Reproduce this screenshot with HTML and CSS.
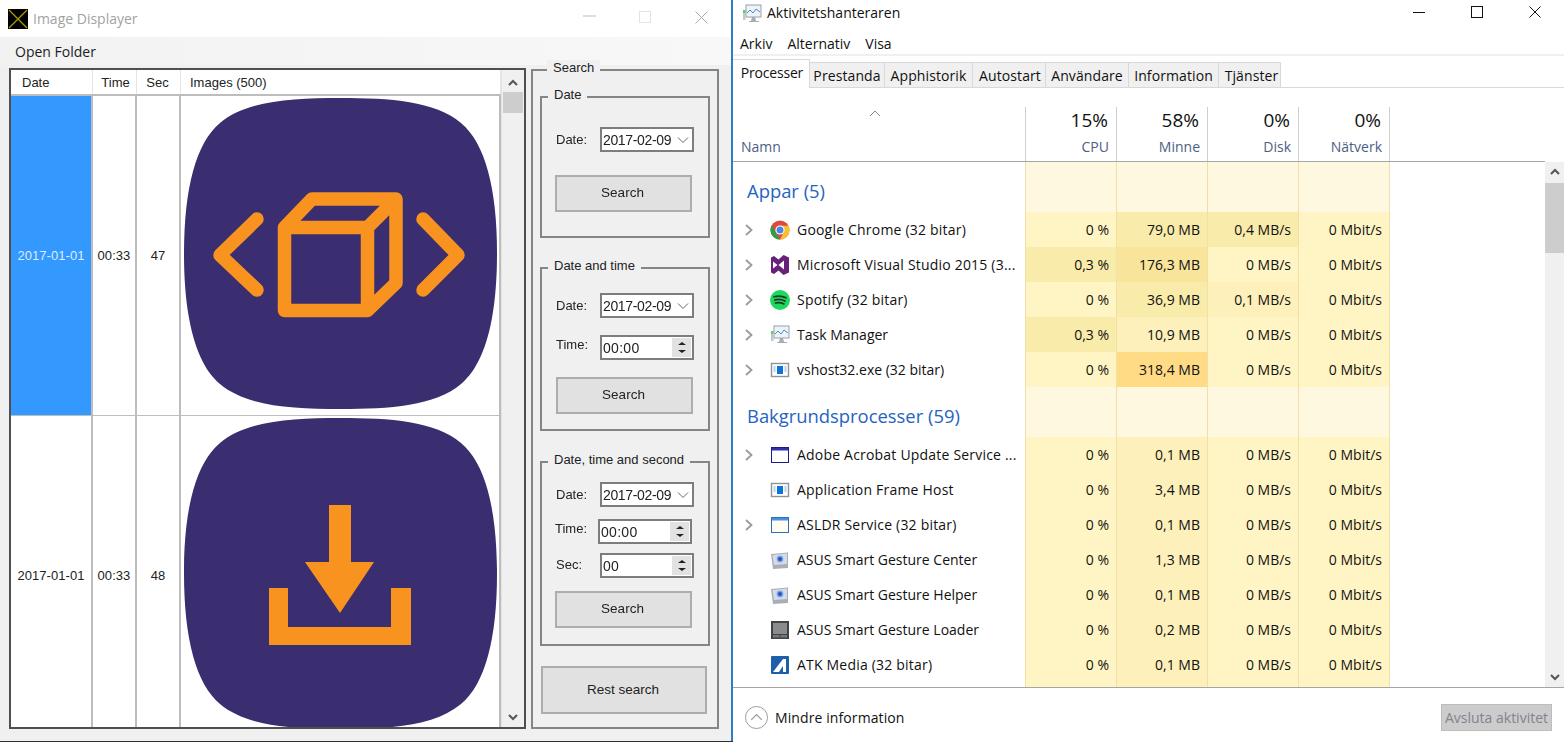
FILE: index.html
```html
<!DOCTYPE html>
<html lang="en">
<head>
    <meta charset="UTF-8">
    <meta name="viewport" content="width=device-width, initial-scale=1.0">
    <title>Image Displayer and Task Manager</title>
    <link rel="stylesheet" href="styles.css">
</head>
<body>
    <svg class="icon-defs" aria-hidden="true">
        <symbol id="squircle" viewBox="0 0 313 311">
            <path d="M156.5 0C206 0 251 3 277 25C301 45 313 90 313 155.5C313 221 301 266 277 286C251 308 206 311 156.5 311C107 311 62 308 36 286C12 266 0 221 0 155.5C0 90 12 45 36 25C62 3 107 0 156.5 0Z" fill="#3a2d70"/>
        </symbol>
        <symbol id="chev" viewBox="0 0 10 14">
            <path d="M2 2l5.5 5L2 12" fill="none" stroke="#9a9a9a" stroke-width="1.8"/>
        </symbol>
        <symbol id="ico-taskman" viewBox="0 0 20 20">
            <rect x="4" y="1" width="15" height="12" fill="#eef3f8" stroke="#9aa0a6"/>
            <path d="M5 9l3-3 3 3 3-4 4 3" fill="none" stroke="#3f8fd8"/>
            <rect x="1" y="6" width="2.5" height="10" fill="#c4c8c8"/>
            <rect x="1" y="6" width="2.5" height="3" fill="#5fce5f"/>
            <path d="M10 13h3l1 4h3v1H7v-1h2z" fill="#a8acb0"/>
        </symbol>
        <symbol id="ico-app" viewBox="0 0 20 20">
            <rect x="1.5" y="3.5" width="17" height="13" fill="#fff" stroke="#8f9296" stroke-width="1.4"/>
            <rect x="7" y="6" width="6" height="8" fill="#0a74d8"/>
            <path d="M3.5 7h2M3.5 9h2M3.5 11h2M14.5 7h2M14.5 9h2M14.5 11h2" stroke="#6aa6dc"/>
        </symbol>
        <symbol id="ico-gesture" viewBox="0 0 20 20">
            <path d="M1 4l17-1.500V18L3 19z" fill="#a9aeb6"/>
            <path d="M2.500 5L17 3.500V14L4 15z" fill="#d4dbe6"/>
            <circle cx="10" cy="9" r="3.400" fill="#7fa6e6"/>
            <circle cx="10" cy="9" r="2" fill="#1f55c4"/>
        </symbol>
    </svg>

    <div class="viewer">
        <div class="viewer-title">
            <svg class="viewer-logo" viewBox="0 0 20 20">
                <rect width="20" height="20" fill="#000"/>
                <path d="M1 1l18 18M19 1L1 19" stroke="#a8a000" stroke-width="1.2"/>
            </svg>
            <span class="viewer-name">Image Displayer</span>
            <div class="viewer-controls">
                <svg width="13" height="13" viewBox="0 0 13 13"><path d="M0 5h13" stroke="#bdbdbd"/></svg>
                <svg width="13" height="13" viewBox="0 0 13 13"><rect x=".5" y=".5" width="11" height="11" fill="none" stroke="#e3e3e3"/></svg>
                <svg width="13" height="13" viewBox="0 0 13 13"><path d="M.5.5l12 12M12.5.5l-12 12" stroke="#a9a9a9"/></svg>
            </div>
        </div>
        <div class="viewer-menu">Open Folder</div>
        <div class="viewer-body">
            <div class="grid">
                <div class="grid-main">
                    <div class="grid-row grid-head">
                        <div class="cell-date head-date">Date</div>
                        <div class="cell-time">Time</div>
                        <div class="cell-sec">Sec</div>
                        <div class="cell-img">Images (500)</div>
                    </div>
                    <div class="grid-row grid-item">
                        <div class="cell-date selected">2017-01-01</div>
                        <div class="cell-time">00:33</div>
                        <div class="cell-sec">47</div>
                        <div class="cell-img">
                            <svg class="thumb" viewBox="0 0 313 311">
                                <use href="#squircle"/>
                                <g fill="none" stroke="#f7931e" stroke-width="13.5" stroke-linecap="round" stroke-linejoin="round">
                                    <path d="M100.5 129.500V212.500H183.500V129.500H100.500L128 101H212V185L183.500 212.500M183.500 129.500L212 101"/>
                                    <path d="M73 121L36 157L73 192M239 121L274 157L239 192"/>
                                </g>
                            </svg>
                        </div>
                    </div>
                    <div class="grid-row grid-item">
                        <div class="cell-date">2017-01-01</div>
                        <div class="cell-time">00:33</div>
                        <div class="cell-sec">48</div>
                        <div class="cell-img">
                            <svg class="thumb" viewBox="0 0 313 311">
                                <use href="#squircle"/>
                                <path fill="#f7931e" d="M145 87h22v57h23l-34 51-35-51h24zM85 170h19v39h103v-39h20v57H85z"/>
                            </svg>
                        </div>
                    </div>
                </div>
                <div class="scrollbar viewer-scroll">
                    <svg class="scroll-arrow" viewBox="0 0 12 8"><path d="M2 6l4-4 4 4" fill="none" stroke="#555" stroke-width="2"/></svg>
                    <div class="scroll-thumb"></div>
                    <svg class="scroll-arrow scroll-end" viewBox="0 0 12 8"><path d="M2 2l4 4 4-4" fill="none" stroke="#555" stroke-width="2"/></svg>
                </div>
            </div>

            <div class="group search-box">
                <span class="group-title">Search</span>

                <div class="group search-date">
                    <span class="group-title">Date</span>
                    <div class="field-row">
                        <label>Date:</label>
                        <div class="field combo">2017-02-09<svg viewBox="0 0 12 8"><path d="M1 1.500l5 5 5-5" fill="none" stroke="#666"/></svg></div>
                    </div>
                    <button class="win-btn">Search</button>
                </div>

                <div class="group search-time">
                    <span class="group-title">Date and time</span>
                    <div class="field-row">
                        <label>Date:</label>
                        <div class="field combo">2017-02-09<svg viewBox="0 0 12 8"><path d="M1 1.500l5 5 5-5" fill="none" stroke="#666"/></svg></div>
                    </div>
                    <div class="field-row">
                        <label class="label-up">Time:</label>
                        <div class="field spin">00:00<span class="spin-btns"><i class="up"></i><i class="down"></i></span></div>
                    </div>
                    <button class="win-btn">Search</button>
                </div>

                <div class="group search-sec">
                    <span class="group-title">Date, time and second</span>
                    <div class="field-row">
                        <label>Date:</label>
                        <div class="field combo">2017-02-09<svg viewBox="0 0 12 8"><path d="M1 1.500l5 5 5-5" fill="none" stroke="#666"/></svg></div>
                    </div>
                    <div class="field-row row-shift">
                        <label class="label-up">Time:</label>
                        <div class="field spin">00:00<span class="spin-btns"><i class="up"></i><i class="down"></i></span></div>
                    </div>
                    <div class="field-row">
                        <label class="label-up-sm">Sec:</label>
                        <div class="field spin">00<span class="spin-btns"><i class="up"></i><i class="down"></i></span></div>
                    </div>
                    <button class="win-btn">Search</button>
                </div>

                <button class="win-btn rest-btn">Rest search</button>
            </div>
        </div>
    </div>

    <div class="taskman">
        <div class="tm-title">
            <svg class="tm-logo"><use href="#ico-taskman"/></svg>
            <span class="tm-name">Aktivitetshanteraren</span>
            <div class="tm-controls">
                <svg width="12" height="12" viewBox="0 0 12 12"><path d="M0 6.500h12" stroke="#111"/></svg>
                <svg width="12" height="12" viewBox="0 0 12 12"><rect x=".5" y=".5" width="11" height="11" fill="none" stroke="#111"/></svg>
                <svg width="12" height="12" viewBox="0 0 12 12"><path d="M.5.5l11 11M11.500.5l-11 11" stroke="#111"/></svg>
            </div>
        </div>
        <div class="tm-menu">
            <span>Arkiv</span>
            <span>Alternativ</span>
            <span>Visa</span>
        </div>
        <div class="tm-tabs">
            <div class="tab active">Processer</div>
            <div class="tab tab-perf">Prestanda</div>
            <div class="tab tab-hist">Apphistorik</div>
            <div class="tab tab-start">Autostart</div>
            <div class="tab tab-users">Användare</div>
            <div class="tab tab-info">Information</div>
            <div class="tab tab-serv">Tjänster</div>
        </div>

        <div class="tm-table">
            <div class="tm-main">
                <div class="tm-head">
                    <div class="head-name">
                        <svg class="sort-caret" viewBox="0 0 12 7"><path d="M1 6l5-5 5 5" fill="none" stroke="#888"/></svg>
                        <span>Namn</span>
                    </div>
                    <div class="head-col"><b>15%</b><span>CPU</span></div>
                    <div class="head-col"><b>58%</b><span>Minne</span></div>
                    <div class="head-col"><b>0%</b><span>Disk</span></div>
                    <div class="head-col head-last"><b>0%</b><span>Nätverk</span></div>
                </div>

                <div class="tm-row tm-group">
                    <div class="name"><span class="group-name">Appar (5)</span></div>
                    <div class="val"></div><div class="val"></div><div class="val"></div><div class="val"></div>
                </div>

                <div class="tm-row">
                    <div class="name">
                        <svg class="expander"><use href="#chev"/></svg>
                        <svg class="proc-icon" viewBox="0 0 20 20">
                            <circle cx="10" cy="10" r="9.500" fill="#dd4b3e"/>
                            <path d="M1.800 5.200L6 13l4 6.500A9.500 9.500 0 0 1 1.800 5.200z" fill="#2f9e47"/>
                            <path d="M10 5.800h8.600A9.500 9.500 0 0 1 10 19.500L14 12z" fill="#fbc02d"/>
                            <circle cx="10" cy="10" r="4.600" fill="#fff"/>
                            <circle cx="10" cy="10" r="3.500" fill="#4a86e8"/>
                        </svg>
                        <span>Google Chrome (32 bitar)</span>
                    </div>
                    <div class="val heat-0">0 %</div><div class="val heat-1">79,0 MB</div><div class="val heat-1">0,4 MB/s</div><div class="val heat-0">0 Mbit/s</div>
                </div>
                <div class="tm-row">
                    <div class="name">
                        <svg class="expander"><use href="#chev"/></svg>
                        <svg class="proc-icon" viewBox="0 0 20 20">
                            <path d="M13.500 0L19 2.500v15L13.500 20 8.500 15.500 4 19l-3-1.500v-15L4 1l4.500 3.500z" fill="#68217a"/>
                            <path d="M14 5.500v9L8.500 10zM3 6.500L7.500 10 3 13.500z" fill="#fff"/>
                        </svg>
                        <span>Microsoft Visual Studio 2015 (3...</span>
                    </div>
                    <div class="val heat-1">0,3 %</div><div class="val heat-2">176,3 MB</div><div class="val heat-0">0 MB/s</div><div class="val heat-0">0 Mbit/s</div>
                </div>
                <div class="tm-row">
                    <div class="name">
                        <svg class="expander"><use href="#chev"/></svg>
                        <svg class="proc-icon" viewBox="0 0 20 20">
                            <circle cx="10" cy="10" r="10" fill="#1ed760"/>
                            <path d="M4 6.800c4-1.200 8.500-.8 12 1M4.700 10c3.500-1 7.300-.6 10.300 1M5.400 13c3-.8 6-.5 8.600.9" fill="none" stroke="#1a3a24" stroke-width="1.700" stroke-linecap="round"/>
                        </svg>
                        <span>Spotify (32 bitar)</span>
                    </div>
                    <div class="val heat-0">0 %</div><div class="val heat-1">36,9 MB</div><div class="val heat-low">0,1 MB/s</div><div class="val heat-0">0 Mbit/s</div>
                </div>
                <div class="tm-row">
                    <div class="name tight">
                        <svg class="expander"><use href="#chev"/></svg>
                        <svg class="proc-icon"><use href="#ico-taskman"/></svg>
                        <span>Task Manager</span>
                    </div>
                    <div class="val heat-1">0,3 %</div><div class="val heat-low">10,9 MB</div><div class="val heat-0">0 MB/s</div><div class="val heat-0">0 Mbit/s</div>
                </div>
                <div class="tm-row">
                    <div class="name tight">
                        <svg class="expander"><use href="#chev"/></svg>
                        <svg class="proc-icon"><use href="#ico-app"/></svg>
                        <span>vshost32.exe (32 bitar)</span>
                    </div>
                    <div class="val heat-0">0 %</div><div class="val heat-3">318,4 MB</div><div class="val heat-0">0 MB/s</div><div class="val heat-0">0 Mbit/s</div>
                </div>

                <div class="tm-row tm-group">
                    <div class="name"><span class="group-name">Bakgrundsprocesser (59)</span></div>
                    <div class="val"></div><div class="val"></div><div class="val"></div><div class="val"></div>
                </div>

                <div class="tm-row">
                    <div class="name">
                        <svg class="expander"><use href="#chev"/></svg>
                        <svg class="proc-icon" viewBox="0 0 20 20">
                            <rect x="1.500" y="2.500" width="17" height="15" fill="#fff" stroke="#1c1c8c"/>
                            <rect x="2" y="3" width="16" height="2.500" fill="#3030b0"/>
                        </svg>
                        <span>Adobe Acrobat Update Service ...</span>
                    </div>
                    <div class="val heat-0">0 %</div><div class="val heat-low">0,1 MB</div><div class="val heat-0">0 MB/s</div><div class="val heat-0">0 Mbit/s</div>
                </div>
                <div class="tm-row">
                    <div class="name">
                        <svg class="proc-icon no-expander"><use href="#ico-app"/></svg>
                        <span>Application Frame Host</span>
                    </div>
                    <div class="val heat-0">0 %</div><div class="val heat-low">3,4 MB</div><div class="val heat-0">0 MB/s</div><div class="val heat-0">0 Mbit/s</div>
                </div>
                <div class="tm-row">
                    <div class="name">
                        <svg class="expander"><use href="#chev"/></svg>
                        <svg class="proc-icon" viewBox="0 0 20 20">
                            <rect x="1.500" y="2.500" width="17" height="15" fill="#fffdf2" stroke="#2a6fc0"/>
                            <rect x="2" y="3" width="16" height="2.500" fill="#4a90dc"/>
                        </svg>
                        <span>ASLDR Service (32 bitar)</span>
                    </div>
                    <div class="val heat-0">0 %</div><div class="val heat-low">0,1 MB</div><div class="val heat-0">0 MB/s</div><div class="val heat-0">0 Mbit/s</div>
                </div>
                <div class="tm-row">
                    <div class="name tight">
                        <svg class="proc-icon no-expander"><use href="#ico-gesture"/></svg>
                        <span>ASUS Smart Gesture Center</span>
                    </div>
                    <div class="val heat-0">0 %</div><div class="val heat-low">1,3 MB</div><div class="val heat-0">0 MB/s</div><div class="val heat-0">0 Mbit/s</div>
                </div>
                <div class="tm-row">
                    <div class="name tight">
                        <svg class="proc-icon no-expander"><use href="#ico-gesture"/></svg>
                        <span>ASUS Smart Gesture Helper</span>
                    </div>
                    <div class="val heat-0">0 %</div><div class="val heat-low">0,1 MB</div><div class="val heat-0">0 MB/s</div><div class="val heat-0">0 Mbit/s</div>
                </div>
                <div class="tm-row">
                    <div class="name tight">
                        <svg class="proc-icon no-expander" viewBox="0 0 20 20">
                            <rect x="1" y="1" width="18" height="18" fill="#3f4449"/>
                            <rect x="3" y="3" width="14" height="11" fill="#8b8b8b"/>
                            <rect x="3" y="15" width="6.500" height="2.500" fill="#777"/>
                            <rect x="10.500" y="15" width="6.500" height="2.500" fill="#777"/>
                        </svg>
                        <span>ASUS Smart Gesture Loader</span>
                    </div>
                    <div class="val heat-0">0 %</div><div class="val heat-low">0,2 MB</div><div class="val heat-0">0 MB/s</div><div class="val heat-0">0 Mbit/s</div>
                </div>
                <div class="tm-row">
                    <div class="name">
                        <svg class="proc-icon no-expander" viewBox="0 0 20 20">
                            <rect x="1" y="1" width="18" height="18" rx="1" fill="#1d5fa8"/>
                            <path d="M3 17L13 4h3v13h-3v-6l-4 6z" fill="#fff"/>
                        </svg>
                        <span>ATK Media (32 bitar)</span>
                    </div>
                    <div class="val heat-0">0 %</div><div class="val heat-low">0,1 MB</div><div class="val heat-0">0 MB/s</div><div class="val heat-0">0 Mbit/s</div>
                </div>
                <div class="tm-row">
                    <div class="name"></div>
                    <div class="val heat-0"></div><div class="val heat-low"></div><div class="val heat-0"></div><div class="val heat-0"></div>
                </div>
            </div>
            <div class="scrollbar tm-scroll">
                <svg class="scroll-arrow" viewBox="0 0 12 8"><path d="M2 6l4-4 4 4" fill="none" stroke="#555" stroke-width="2"/></svg>
                <div class="scroll-thumb"></div>
                <svg class="scroll-arrow scroll-end" viewBox="0 0 12 8"><path d="M2 2l4 4 4-4" fill="none" stroke="#555" stroke-width="2"/></svg>
            </div>
        </div>

        <div class="tm-footer">
            <svg class="less-icon" viewBox="0 0 24 24">
                <circle cx="12" cy="12" r="11.500" fill="none" stroke="#999"/>
                <path d="M6.500 14.500L12 9l5.500 5.500" fill="none" stroke="#999" stroke-width="1.300"/>
            </svg>
            <span class="less-text">Mindre information</span>
            <button class="end-task">Avsluta aktivitet</button>
        </div>
    </div>
</body>
</html>
```

FILE: styles.css
```css
* {
    margin: 0;
    padding: 0;
    box-sizing: border-box;
}

body {
    width: 1564px;
    height: 742px;
    display: flex;
    overflow: hidden;
    background: #2b3038;
    font-family: 'Liberation Sans', Arial, sans-serif;
}

.icon-defs {
    display: none;
}

/* Image Displayer window */
.viewer {
    width: 733px;
    height: 741px;
    flex-shrink: 0;
    background: #f0f0f0;
    border-right: 2px solid #2f7fc0;
    color: #222;
    font-size: 13px;
}

.viewer-title {
    height: 37px;
    display: flex;
    align-items: center;
    padding-left: 8px;
    background: white;
}

.viewer-logo {
    width: 20px;
    height: 20px;
}

.viewer-name {
    margin-left: 5px;
    font-family: 'Open Sans', sans-serif;
    font-size: 14px;
    color: #a2a2a2;
}

.viewer-controls {
    margin-left: auto;
    padding: 0 23px 2px 0;
    display: flex;
    gap: 43px;
}

.viewer-menu {
    height: 28px;
    line-height: 29px;
    padding-left: 15px;
    font-family: 'Open Sans', sans-serif;
    font-size: 14px;
    color: #1c1c1c;
    background: linear-gradient(to right, #f2f2f2, #f8f8f8);
}

.viewer-body {
    display: flex;
    padding: 3px 0 0 9px;
    filter: blur(0.35px);
}

.grid {
    width: 517px;
    height: 661px;
    display: flex;
    border: 2px solid #4f4f4f;
    background: white;
}

.grid-main {
    width: 490px;
    overflow: hidden;
}

.grid-row {
    display: flex;
}

.grid-row > div {
    border-right: 2px solid #bdbdbd;
    flex-shrink: 0;
}

.grid-head {
    height: 26px;
    border-bottom: 2px solid #bdbdbd;
}

.grid-head > div {
    padding-top: 2px;
    line-height: 22px;
    border-right-width: 1px;
    border-right-color: #e4e4e4;
}

.grid-item {
    height: 320px;
    border-bottom: 1px solid #bdbdbd;
    align-items: stretch;
    letter-spacing: 0.05px;
}

.cell-date {
    width: 82px;
    display: flex;
    align-items: center;
    justify-content: center;
}

.cell-time {
    width: 44px;
    display: flex;
    align-items: center;
    justify-content: center;
}

.cell-sec {
    width: 44px;
    display: flex;
    align-items: center;
    justify-content: center;
}

.cell-img {
    width: 320px;
}

.grid-head .cell-img {
    padding-left: 9px;
}

.grid-head .cell-time {
    padding-left: 2px;
}

.grid-head .cell-sec {
    padding-right: 2px;
}

.head-date {
    justify-content: flex-start;
    padding-left: 11px;
}

.selected {
    background: #3399ff;
    color: #dcecff;
}

.thumb {
    display: block;
    width: 313px;
    height: 311px;
    margin: 2px 0 0 3px;
}

.scrollbar {
    display: flex;
    flex-direction: column;
    align-items: center;
    background: #f0f0f0;
}

.viewer-scroll {
    width: 23px;
    border-left: 1px solid #e4e4e4;
    padding-top: 9px;
}

.viewer-scroll .scroll-thumb {
    width: 20px;
    height: 21px;
    margin-top: 5px;
}

.scroll-arrow {
    width: 12px;
    height: 8px;
    flex-shrink: 0;
}

.scroll-thumb {
    background: #cdcdcd;
}

.scroll-end {
    margin-top: auto;
    margin-bottom: 6px;
}

.group {
    position: relative;
    border: 2px solid #858585;
}

.group-title {
    position: absolute;
    top: -11px;
    left: 6px;
    padding: 0 6px;
    line-height: 16px;
    background: #f0f0f0;
    white-space: nowrap;
}

.search-box {
    width: 188px;
    height: 660px;
    margin: 1px 0 0 5px;
    padding: 25px 7px 0 7px;
    flex-shrink: 0;
}

.search-box > .group-title {
    left: 14px;
}

.search-date {
    height: 142px;
    padding-top: 29px;
}

.search-time {
    height: 164px;
    margin-top: 29px;
    padding-top: 24px;
}

.search-sec {
    height: 185px;
    margin-top: 30px;
    padding-top: 19px;
}

.field-row {
    display: flex;
    align-items: center;
    padding-left: 14px;
    margin-bottom: 17px;
}

.field-row label {
    width: 44px;
}

.label-up {
    padding-bottom: 6px;
}

.label-up-sm {
    padding-bottom: 2px;
}

.search-sec .field-row {
    margin-bottom: 12px;
}

.search-sec .field-row + .field-row {
    margin-bottom: 9px;
}

.search-sec .field-row + .field-row + .field-row {
    margin-bottom: 13px;
}

.row-shift {
    padding-left: 13px;
}

.row-shift label {
    width: 43px;
}

.field {
    width: 94px;
    height: 25px;
    display: flex;
    align-items: center;
    padding-left: 1px;
    background: white;
    border: 2px solid #7d7d7d;
    font-size: 14px;
}

.combo svg {
    width: 12px;
    height: 8px;
    margin-left: auto;
    margin-right: 3px;
}

.combo {
    letter-spacing: -0.35px;
}

.spin {
    letter-spacing: 0.3px;
}

.spin-btns {
    width: 19px;
    height: 19px;
    margin-left: auto;
    margin-right: 1px;
    display: flex;
    flex-direction: column;
    align-items: center;
    background: #e2e2e2;
}

.spin-btns i {
    width: 0;
    height: 0;
    border-left: 4px solid transparent;
    border-right: 4px solid transparent;
}

.spin-btns .up {
    margin-top: 4px;
    border-bottom: 3px solid #222;
}

.spin-btns .down {
    margin-top: 5px;
    border-top: 3px solid #222;
}

.win-btn {
    display: block;
    width: 137px;
    height: 37px;
    padding: 0 2px 2px 0;
    background: #e1e1e1;
    border: 2px solid #adadad;
    color: #222;
    font-family: inherit;
    font-size: 13.5px;
}

.search-date .win-btn {
    margin: 23px 0 0 13px;
}

.search-time .win-btn {
    margin: 17px 0 0 14px;
}

.search-sec .win-btn {
    margin-left: 13px;
}

.rest-btn {
    width: 166px;
    height: 48px;
    margin: 20px 0 0 1px;
}

/* Task manager window */
.taskman {
    flex: 1;
    height: 742px;
    display: flex;
    flex-direction: column;
    background: white;
    color: #111;
    font-family: 'Open Sans', sans-serif;
    font-size: 14px;
}

.tm-title {
    height: 30px;
    display: flex;
    align-items: flex-start;
    padding: 4px 23px 0 9px;
}

.tm-logo {
    width: 20px;
    height: 20px;
}

.tm-name {
    margin-left: 5px;
    line-height: 18px;
}

.tm-controls {
    margin-left: auto;
    padding-top: 2px;
    display: flex;
    gap: 46px;
}

.tm-menu {
    height: 26px;
    display: flex;
    gap: 15px;
    padding-left: 7px;
    line-height: 27px;
    border-bottom: 2px solid #f0f0f0;
}

.tm-tabs {
    height: 32px;
    display: flex;
    align-items: flex-end;
    border-bottom: 1px solid #d9d9d9;
}

.tab {
    height: 26px;
    line-height: 25px;
    text-align: center;
    letter-spacing: 0.1px;
    background: #f0f0f0;
    border: 1px solid #d9d9d9;
    border-left: none;
    margin-bottom: -1px;
}

.tab.active {
    width: 77px;
    height: 29px;
    padding-left: 2px;
    letter-spacing: -0.2px;
    background: white;
    border-bottom: none;
    line-height: 26px;
}

.tab-perf { width: 75px; }
.tab-hist { width: 88px; }
.tab-start { width: 73px; padding-left: 2px; }
.tab-users { width: 83px; }
.tab-info { width: 90px; }
.tab-serv { width: 62px; padding-left: 4px; }

.tm-table {
    height: 581px;
    display: flex;
    margin-top: 19px;
    border-bottom: 1px solid #a5a5a5;
    overflow: hidden;
}

.tm-main {
    width: 812px;
    flex-shrink: 0;
    overflow: hidden;
}

.tm-head {
    height: 55px;
    display: grid;
    grid-template-columns: 292px repeat(4, 91px);
    border-bottom: 1px solid #a5a5a5;
}

.head-name {
    position: relative;
    padding: 30px 0 0 8px;
    color: #4d6082;
}

.sort-caret {
    position: absolute;
    left: 136px;
    top: 3px;
    width: 12px;
    height: 7px;
}

.head-col {
    display: flex;
    flex-direction: column;
    align-items: flex-end;
    padding: 0 7px 0 0;
    border-left: 1px solid #cfcfcf;
    color: #4d6082;
}

.head-last {
    border-right: 1px solid #cfcfcf;
    width: 92px;
}

.head-col b {
    height: 30px;
    margin-right: 1px;
    font-size: 19px;
    font-weight: 400;
    color: #111;
}

.tm-row {
    height: 35px;
    display: grid;
    grid-template-columns: 292px repeat(4, 91px);
}

.tm-group {
    height: 50px;
}

.name {
    display: flex;
    align-items: center;
    white-space: nowrap;
    overflow: hidden;
    letter-spacing: 0.2px;
}

.name.tight {
    letter-spacing: 0;
}

.tm-group .name {
    padding: 7px 0 0 14px;
    letter-spacing: 0;
}

.group-name {
    font-size: 18.4px;
    color: #2563c0;
}

.expander {
    width: 10px;
    height: 14px;
    margin-left: 11px;
    flex-shrink: 0;
}

.proc-icon {
    width: 20px;
    height: 20px;
    margin: 0 7px 0 16px;
    flex-shrink: 0;
}

.no-expander {
    margin-left: 37px;
}

.val {
    padding-right: 7px;
    line-height: 35px;
    text-align: right;
    background: #fff8e1;
    border-left: 1px solid #f2dfa6;
}

.val:last-child {
    width: 92px;
    border-right: 1px solid #f2dfa6;
}

.heat-0 { background: #fff4c4; }
.heat-low { background: #fdf0ba; }
.heat-1 { background: #f9ebaa; }
.heat-2 { background: #f8e59b; }
.heat-3 { background: #ffdb85; }

.tm-scroll {
    width: 19px;
    margin: 55px 0 0 auto;
}

.tm-scroll .scroll-arrow {
    margin-top: 6px;
    margin-bottom: 7px;
}

.tm-scroll .scroll-thumb {
    width: 19px;
    height: 70px;
}

.tm-scroll .scroll-end {
    margin-top: auto;
    margin-bottom: 6px;
}

.tm-footer {
    flex: 1;
    display: flex;
    align-items: center;
    padding: 5px 12px 0 12px;
}

.less-icon {
    width: 23px;
    height: 23px;
}

.less-text {
    margin-left: 7px;
    letter-spacing: 0.1px;
}

.end-task {
    width: 111px;
    height: 27px;
    margin-left: auto;
    background: #cccccc;
    border: 1px solid #bdbdbd;
    color: #83838f;
    font-family: inherit;
    font-size: 14px;
}
```
